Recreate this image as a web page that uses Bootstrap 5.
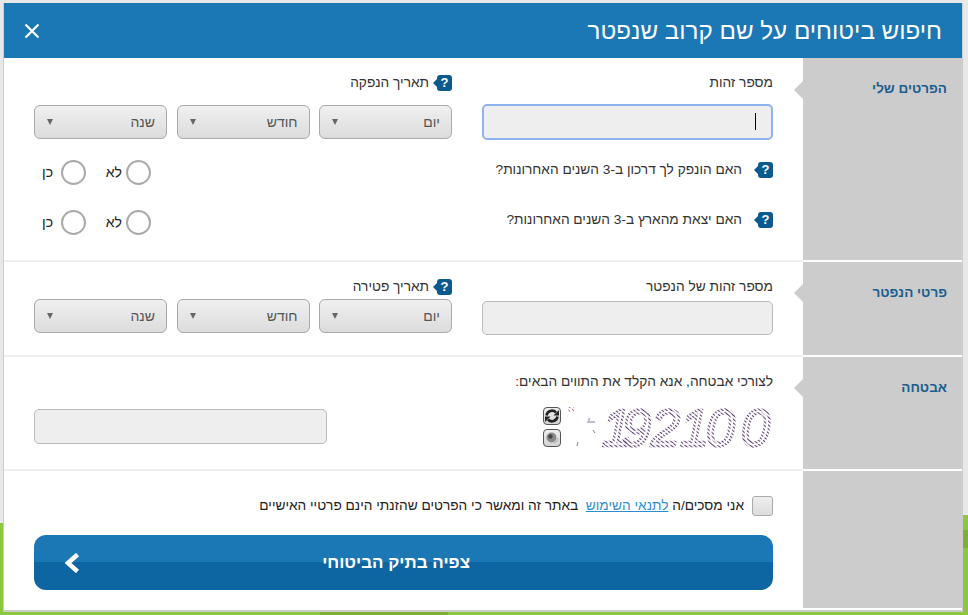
<!DOCTYPE html>
<html lang="he" dir="rtl">
<head>
  <meta charset="UTF-8" />
  <meta name="viewport" content="width=device-width, initial-scale=1.0"/>
  <title>חיפוש ביטוחים על שם קרוב שנפטר</title>
  <link href="https://cdn.jsdelivr.net/npm/bootstrap@5.3.0/dist/css/bootstrap.min.css" rel="stylesheet"/>
  <style>
    html, body {
      height: 615px;
      overflow: hidden;
    }
    body {
      background-color: #e8e8e8;
      background-image:
        linear-gradient(#7fae35, #7fae35),
        linear-gradient(#7fae35, #7fae35),
        linear-gradient(179.5deg, #e8e8e8 0, #e8e8e8 523px, #8dc63f 523px, #8dc63f 100%);
      background-size: 128px 4px, 5px 18px, 100% 100%;
      background-position: 320px 611px, 963px 530px, 0 0;
      background-repeat: no-repeat;
      font-family: "Liberation Sans", Arial, sans-serif;
      font-size: 13.7px;
      color: #333;
      padding: 3px 6px 0 4px;
    }
    .sheet {
      background: #fff;
      height: 607px;
      box-shadow: 0 1px 0 1px #ccc;
    }
    .sheet-head {
      background: #1c78b5;
      color: #fff;
      height: 55px;
      flex: none;
      padding: 0 20px;
    }
    .sheet-head h1 {
      font-size: 24.2px;
      font-weight: 400;
      margin: 0;
    }
    .close-x {
      background: none;
      border: 0;
      padding: 0;
      line-height: 0;
    }
    .part-side {
      width: 159px;
      flex: none;
      background: #ccc;
      color: #1b5e8e;
      font-weight: 700;
      font-size: 13.5px;
      padding: 21px 15px 0 0;
      margin-bottom: 2px;
      position: relative;
    }
    .part-side.first-side {
      padding-top: 21px;
    }
    .tip-shape {
      position: absolute;
      left: -9px;
      top: 22px;
      width: 9px;
      height: 18px;
      background: #ccc;
      clip-path: polygon(100% 0, 0 50%, 100% 100%);
    }
    .first-side .tip-shape {
      top: 23px;
    }
    .part-main {
      flex-grow: 1;
      padding: 16px 30px 20px;
      border-bottom: 2px solid #eee;
    }
    .part-main.last-main {
      padding-top: 25px;
      border-bottom: 0;
    }
    .col-id {
      width: 291px;
      flex: none;
    }
    .col-date {
      width: 418px;
      flex: none;
    }
    .field-label {
      height: 18px;
      line-height: 18px;
      margin-bottom: 5px;
    }
    .field-label.wide-gap {
      margin-bottom: 13px;
    }
    .field-label.tight-gap {
      margin-bottom: 3px;
    }
    .txt-input {
      display: block;
      width: 100%;
      height: 34px;
      background: #eee;
      border: 1px solid #bbb;
      border-radius: 5px;
      outline: 0;
      padding: 0 16px;
    }
    .txt-input.is-on {
      height: 36px;
      margin-top: -1px;
      border: 2px solid #8fb3ee;
    }
    .txt-input.code-input {
      width: 293px;
      height: 35px;
      flex: none;
      margin-top: 5px;
    }
    .caret-bar {
      position: absolute;
      right: 17px;
      top: 9px;
      width: 1px;
      height: 17px;
      background: #000;
    }
    .date-select {
      display: block;
      width: 133px;
      height: 34px;
      border: 1px solid #aaa;
      border-radius: 6px;
      padding: 0 11px;
      color: #555;
      font-size: 14px;
      font-family: inherit;
      appearance: none;
      background-color: #e6e6e6;
      background-image: linear-gradient(to bottom, #f0f0f0, #dcdcdc);
    }
    .date-wrap {
      position: relative;
    }
    .date-wrap::after {
      content: "";
      position: absolute;
      left: 13px;
      top: 14px;
      border-style: solid;
      border-width: 6px 3px 0 3px;
      border-color: #666 transparent transparent transparent;
    }
    .help-mark {
      width: 15px;
      height: 16px;
      background: #0b5a8e;
      color: #fff;
      border-radius: 3px;
      font-size: 13px;
      font-weight: 700;
      line-height: 16px;
      text-align: center;
      position: relative;
      flex: none;
    }
    .help-mark::after {
      content: "";
      position: absolute;
      left: -4px;
      top: 4px;
      width: 4px;
      height: 8px;
      background: #0b5a8e;
      clip-path: polygon(100% 0, 0 50%, 100% 100%);
    }
    .ask-row {
      height: 26px;
      margin-top: 24px;
    }
    .ask-row.ask-first {
      margin-top: 17px;
    }
    .ask-row.ask-last {
      margin-bottom: 7px;
    }
    .round-pick {
      width: 25px;
      height: 25px;
      border: 2px solid #aaa;
      border-radius: 50%;
      background: #fff;
      flex: none;
    }
    .pick-label {
      font-size: 14px;
      color: #222;
    }
    .pick-set {
      width: 109px;
      margin-left: 8px;
      margin-top: 4px;
    }
    .captcha-art {
      direction: ltr;
      flex: none;
      overflow: visible;
    }
    .shot-btn {
      width: 18px;
      height: 18px;
      border: 1px solid #555;
      border-radius: 4px;
      background: linear-gradient(to bottom, #eee, #d4d4d4);
      line-height: 0;
    }
    .check-box {
      width: 21px;
      height: 20px;
      border: 1px solid #aaa;
      border-radius: 3px;
      background: linear-gradient(to bottom, #eee, #ddd);
      flex: none;
    }
    .terms-row {
      height: 20px;
      margin-bottom: 19px;
      color: #222;
    }
    .terms-link {
      color: #2f8fcc;
    }
    .go-btn {
      height: 55px;
      width: 100%;
      border: 0;
      border-radius: 12px;
      color: #fff;
      font-weight: 700;
      font-size: 17px;
      background: linear-gradient(to bottom, #1c78b5 0, #1c78b5 27px, #0d66a1 27px, #0d66a1 100%);
      padding: 0 30px;
    }
    .go-label {
      margin-right: 273px;
    }
  </style>
</head>
<body>

<div class="sheet d-flex flex-column">
  <div class="sheet-head d-flex align-items-center justify-content-between">
    <h1>חיפוש ביטוחים על שם קרוב שנפטר</h1>
    <button class="close-x" type="button" aria-label="סגירה">
      <svg width="16" height="16" viewBox="0 0 16 16"><path d="M1.500 1.500l13 13M14.500 1.500l-13 13" stroke="#fff" stroke-width="2.200" fill="none"/></svg>
    </button>
  </div>

  <!-- my details -->
  <div class="d-flex">
    <div class="part-side first-side">הפרטים שלי<span class="tip-shape"></span></div>
    <div class="part-main">
      <div class="d-flex justify-content-between">
        <div class="col-id">
          <div class="field-label wide-gap">מספר זהות</div>
          <div class="position-relative">
            <input class="txt-input is-on" type="text">
            <span class="caret-bar"></span>
          </div>
        </div>
        <div class="col-date">
          <div class="field-label wide-gap d-flex align-items-center gap-2"><span class="help-mark">?</span>תאריך הנפקה</div>
          <div class="d-flex justify-content-between">
            <div class="date-wrap"><select class="date-select"><option>יום</option></select></div>
            <div class="date-wrap"><select class="date-select"><option>חודש</option></select></div>
            <div class="date-wrap"><select class="date-select"><option>שנה</option></select></div>
          </div>
        </div>
      </div>
      <div class="ask-row ask-first d-flex align-items-center justify-content-between">
        <div class="d-flex align-items-center gap-3"><span class="help-mark">?</span><span>האם הונפק לך דרכון ב-3 השנים האחרונות?</span></div>
        <div class="pick-set d-flex align-items-center">
          <span class="round-pick"></span><span class="pick-label me-1">לא</span>
          <span class="round-pick me-auto"></span><span class="pick-label me-2">כן</span>
        </div>
      </div>
      <div class="ask-row ask-last d-flex align-items-center justify-content-between">
        <div class="d-flex align-items-center gap-3"><span class="help-mark">?</span><span>האם יצאת מהארץ ב-3 השנים האחרונות?</span></div>
        <div class="pick-set d-flex align-items-center">
          <span class="round-pick"></span><span class="pick-label me-1">לא</span>
          <span class="round-pick me-auto"></span><span class="pick-label me-2">כן</span>
        </div>
      </div>
    </div>
  </div>

  <!-- deceased -->
  <div class="d-flex">
    <div class="part-side">פרטי הנפטר<span class="tip-shape"></span></div>
    <div class="part-main">
      <div class="d-flex justify-content-between">
        <div class="col-id">
          <div class="field-label">מספר זהות של הנפטר</div>
          <input class="txt-input" type="text">
        </div>
        <div class="col-date">
          <div class="field-label tight-gap d-flex align-items-center gap-2"><span class="help-mark">?</span>תאריך פטירה</div>
          <div class="d-flex justify-content-between">
            <div class="date-wrap"><select class="date-select"><option>יום</option></select></div>
            <div class="date-wrap"><select class="date-select"><option>חודש</option></select></div>
            <div class="date-wrap"><select class="date-select"><option>שנה</option></select></div>
          </div>
        </div>
      </div>
    </div>
  </div>

  <!-- captcha -->
  <div class="d-flex">
    <div class="part-side">אבטחה<span class="tip-shape"></span></div>
    <div class="part-main">
      <div class="field-label wide-gap">לצורכי אבטחה, אנא הקלד את התווים הבאים:</div>
      <div class="d-flex justify-content-between align-items-start">
        <div class="d-flex align-items-center gap-1">
          <svg class="captcha-art" width="208" height="45" viewBox="0 0 208 45">
            <defs>
              <pattern id="stripes" width="3" height="3" patternUnits="userSpaceOnUse" patternTransform="rotate(-50)">
                <rect width="1.100" height="3" fill="#5f4274"/>
              </pattern>
            </defs>
            <text x="37 57 86 115 141 176" y="42" font-family="Liberation Sans" font-style="italic" font-size="52" stroke="url(#stripes)" stroke-width="2.500" fill="none">192100</text>
            <text x="2" y="17" font-family="Liberation Serif" font-size="20" fill="url(#stripes)">"</text>
            <path d="M22 18h8M24 14v3M12 42l1-4M28 26l2 3" stroke="#8a76a0" stroke-width="1" fill="none"/>
          </svg>
          <div class="d-flex flex-column gap-1">
            <span class="shot-btn"><svg width="16" height="16" viewBox="0 0 16 16"><path d="M2.500 7.500a5.500 5.500 0 0 1 9.500-3" stroke="#222" stroke-width="2.600" fill="none"/><path d="M9.500 7.500h5.500V2z" fill="#222"/><path d="M13.500 8.500a5.500 5.500 0 0 1-9.500 3" stroke="#222" stroke-width="2.600" fill="none"/><path d="M6.500 8.500H1V14z" fill="#222"/></svg></span>
            <span class="shot-btn"><svg width="16" height="16" viewBox="0 0 16 16"><circle cx="7.500" cy="7.500" r="5" fill="#8a8a8a"/><circle cx="6.500" cy="6.500" r="2.200" fill="#444"/><path d="M10 13a6 6 0 0 0 4-5" stroke="#bbb" stroke-width="1.500" fill="none"/></svg></span>
          </div>
        </div>
        <input class="txt-input code-input" type="text">
      </div>
    </div>
  </div>

  <!-- terms -->
  <div class="d-flex flex-grow-1">
    <div class="part-side"></div>
    <div class="part-main last-main">
      <div class="terms-row d-flex align-items-center gap-2">
        <span class="check-box"></span>
        <span>אני מסכים/ה <a class="terms-link" href="#">לתנאי השימוש</a>&nbsp; באתר זה ומאשר כי הפרטים שהזנתי הינם פרטיי האישיים</span>
      </div>
      <button class="go-btn d-flex align-items-center" type="button">
        <span class="go-label">צפיה בתיק הביטוחי</span>
        <svg class="me-auto" width="16" height="20" viewBox="0 0 16 20"><path d="M13.500 1.500L4 10l9.500 8.500" stroke="#fff" stroke-width="4.500" fill="none"/></svg>
      </button>
    </div>
  </div>
</div>

<script src="https://cdn.jsdelivr.net/npm/bootstrap@5.3.0/dist/js/bootstrap.bundle.min.js"></script>
</body>
</html>
